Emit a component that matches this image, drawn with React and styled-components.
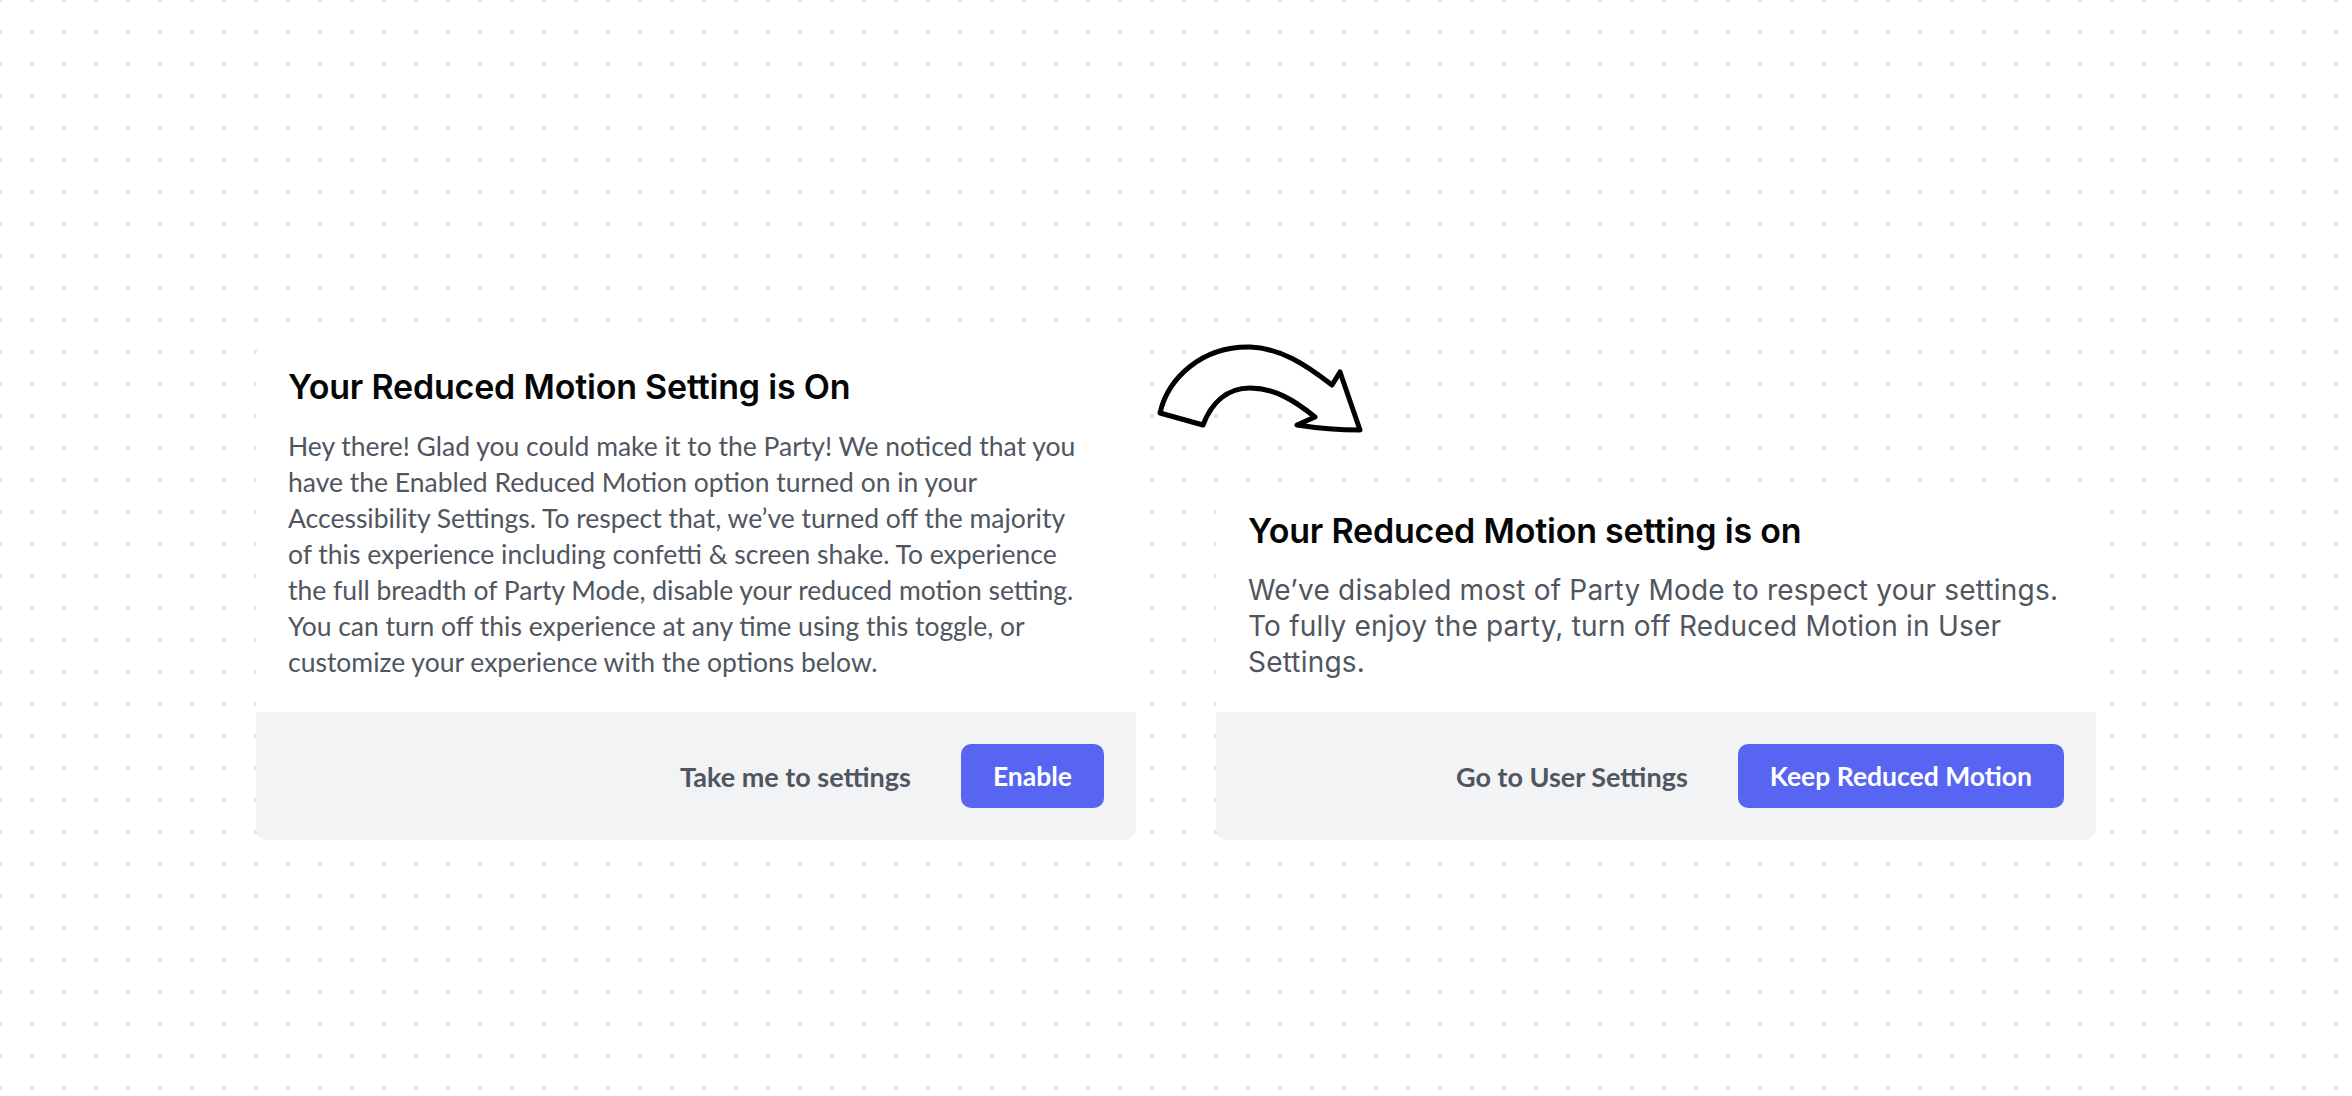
import React from 'react'
import styled, {createGlobalStyle} from 'styled-components'

const GlobalStyle = createGlobalStyle`
    html, body {
        margin: 0;
        padding: 0;
    }
    body {
        width: 2352px;
        height: 1096px;
        overflow: hidden;
        background-color: #ffffff;
        background-image: radial-gradient(circle, #e1e1e3 2px, transparent 2.5px);
        background-size: 32px 32px;
        background-position: -16px -16px;
        font-family: "Inter", "Noto Sans", sans-serif;
    }
`

const cards = [
    {
        variant: 'old',
        title: 'Your Reduced Motion Setting is On',
        body: 'Hey there! Glad you could make it to the Party! We noticed that you have the Enabled Reduced Motion option turned on in your Accessibility Settings. To respect that, we\u2019ve turned off the majority of this experience including confetti & screen shake. To experience the full breadth of Party Mode, disable your reduced motion setting. You can turn off this experience at any time using this toggle, or customize your experience with the options below.',
        link: 'Take me to settings',
        action: 'Enable',
    },
    {
        variant: 'new',
        title: 'Your Reduced Motion setting is on',
        body: 'We\u2019ve disabled most of Party Mode to respect your settings. To fully enjoy the party, turn off Reduced Motion in User Settings.',
        link: 'Go to User Settings',
        action: 'Keep Reduced Motion',
    },
]

const CurvedArrow = () => (
    <svg width="260" height="140" viewBox="0 0 260 140">
        <path
            d="M20 93 C28 58 62 26 110 27 C140 28 165 44 192 65 L200 52 L220 110 C198 110 176 108 157 105 L175 97 C154 80 134 68 110 68 C86 68 71 84 63 105 Z"
            fill="#ffffff"
            stroke="#000000"
            strokeWidth="5"
            strokeLinejoin="round"
        />
    </svg>
)

const App = () => {
  return (
    <>
        <GlobalStyle />
        <Stage>
            {cards.map(card => (
                <Card key={card.variant}>
                    <Content>
                        <Title>{card.title}</Title>
                        <Body variant={card.variant}>{card.body}</Body>
                    </Content>
                    <Footer>
                        <LinkButton>{card.link}</LinkButton>
                        <PrimaryButton>{card.action}</PrimaryButton>
                    </Footer>
                </Card>
            ))}
            <ArrowMark>
                <CurvedArrow />
            </ArrowMark>
        </Stage>
    </>
  )
}

const Stage = styled.div`
    position: relative;
    height: 840px;
    display: flex;
    justify-content: center;
    align-items: flex-end;
    gap: 80px;
`

const Card = styled.div`
    width: 880px;
    background: #ffffff;
    border-radius: 12px;
    overflow: hidden;
    display: flex;
    flex-direction: column;
`

const Content = styled.div`
    padding: 22px 32px 32px;
    display: flex;
    flex-direction: column;
    gap: 19px;
`

const Title = styled.h2`
    margin: 0;
    color: #060607;
    font-family: "Inter", "Noto Sans", sans-serif;
    font-weight: 600;
    font-size: 34px;
    line-height: 44px;
    letter-spacing: -0.2px;
`

const Body = styled.p`
    margin: 0;
    color: #4f5660;
    font-family: ${({variant}) => variant === 'old'
        ? '"Lato", "Noto Sans", sans-serif'
        : '"Inter", "Noto Sans", sans-serif'};
    font-size: ${({variant}) => variant === 'old' ? '26.5px' : '28px'};
    letter-spacing: ${({variant}) => variant === 'old' ? '0' : '0.2px'};
    max-width: ${({variant}) => variant === 'old' ? '796px' : '816px'};
    line-height: 36px;
`

const Footer = styled.div`
    background: #f2f3f5;
    padding: 32px;
    display: flex;
    justify-content: flex-end;
    align-items: center;
    gap: 50px;
`

const LinkButton = styled.button`
    border: none;
    background: none;
    padding: 0;
    color: #4f5660;
    font-family: "Lato", "Noto Sans", sans-serif;
    font-weight: 700;
    font-size: 27px;
    cursor: pointer;
`

const PrimaryButton = styled.button`
    height: 64px;
    padding: 0 32px;
    border: none;
    border-radius: 10px;
    background: #5865f2;
    color: #ffffff;
    font-family: "Lato", "Noto Sans", sans-serif;
    font-weight: 700;
    font-size: 26.5px;
    cursor: pointer;
`

const ArrowMark = styled.div`
    position: absolute;
    top: 320px;
    left: calc(50% - 36px);
    width: 260px;
    height: 140px;
    line-height: 0;
`

export default App
